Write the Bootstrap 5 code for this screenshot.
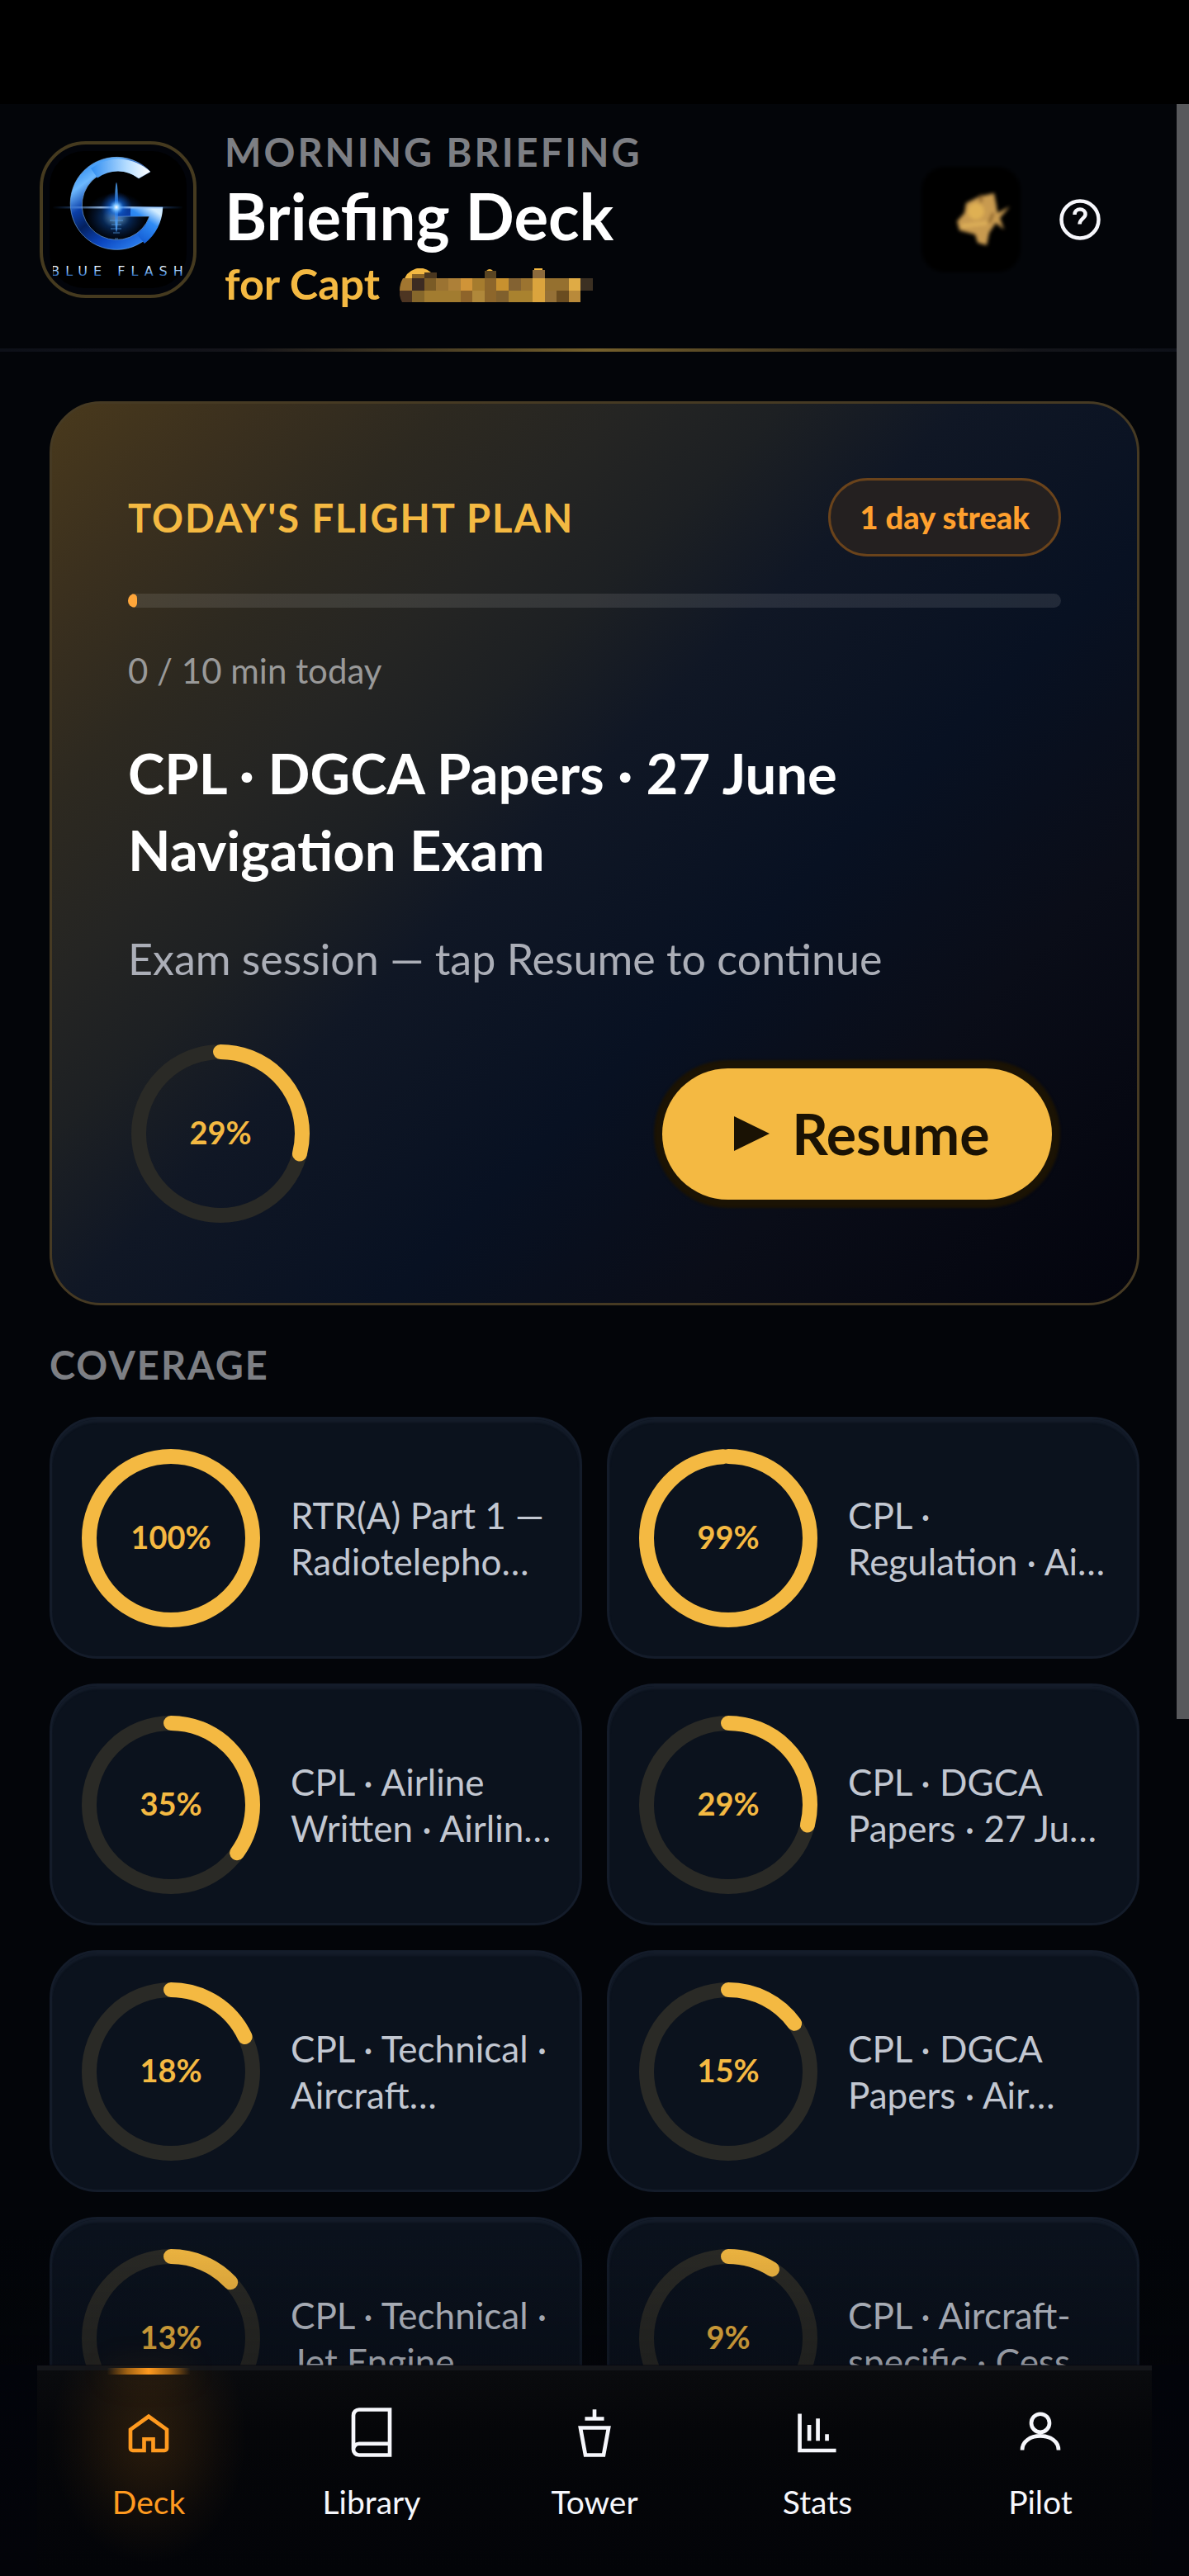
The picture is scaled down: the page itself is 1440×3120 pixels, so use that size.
<!DOCTYPE html>
<html lang="en" data-bs-theme="dark">
<head>
<meta charset="utf-8">
<meta name="viewport" content="width=device-width, initial-scale=1">
<title>Briefing Deck</title>
<link href="https://cdn.jsdelivr.net/npm/bootstrap@5.3.0/dist/css/bootstrap.min.css" rel="stylesheet">
<style>
  :root { --gold: #f4b942; --orange: #ff9a1f; --ink: #030509; --snow: #f6f7fc; --muted: #7d7f84; }
  body { background: var(--ink); color: var(--snow); font-family: Lato, "Open Sans", sans-serif; min-height: 100vh; overflow: hidden; }
  .status-strip { height: 126px; background: #000; }
  .app-header { padding: 27px 66px 43px 48px; }
  .header-rule { height: 4px; background: linear-gradient(90deg, #0d1018, #14141a 20%, #75602c 50%, #3b311e 70%, #14151a 87%, #0d1018); }
  .brand-logo { width: 190px; height: 190px; margin-right: 34px; }
  .eyebrow { font-size: 47px; line-height: 62px; font-weight: 700; letter-spacing: 3px; color: var(--muted); }
  .deck-title { font-size: 78px; line-height: 92px; font-weight: 700; }
  .pilot-line { font-size: 52px; line-height: 72px; font-weight: 700; color: var(--gold); }
  .redacted { width: 240px; height: 44px; }
  .avatar-art { width: 132px; height: 132px; }
  .help-btn { width: 132px; height: 132px; border: 0; color: var(--snow); }
  .content-pad { padding: 60px 60px 0; }
  .hero { border: 3px solid #463a23; border-radius: 62px; padding: 90px 92px 93px;
    background: linear-gradient(135deg, #49391c 0%, #3b301e 10%, #2d2920 20%, #252523 29%, #1d2023 37%, #101725 46%, #081122 62%, #0a0d18 77%, #03040d 100%); }
  .section-label { font-size: 47px; line-height: 60px; font-weight: 700; letter-spacing: 2px; }
  .plan-label { color: var(--gold); }
  .streak-pill { height: 95px; padding: 0 35px; border: 3px solid #6a431b; border-radius: 48px; background: #242020; color: #ffa02e; font-size: 38px; font-weight: 900; }
  .goal-bar { height: 17px; border-radius: 9px; margin: 45px 0 46px; background: rgba(255,255,255,.1); }
  .goal-bar .progress-bar { border-radius: 9px; background: #ffa63a; }
  .goal-text { font-size: 42px; line-height: 60px; color: #999999; margin-bottom: 48px; }
  .hero-title { font-size: 67px; line-height: 93px; font-weight: 700; margin-bottom: 49px; }
  .hero-sub { font-size: 52px; line-height: 72px; color: #abaeb7; margin-bottom: 64px; }
  .ring { width: 224px; height: 224px; flex: none; }
  .ring text { font-size: 38px; font-weight: 700; fill: var(--gold); text-anchor: middle; }
  .ring circle { fill: none; stroke-width: 18px; stroke: #2a2a26; }
  .ring .arc { stroke: var(--gold); stroke-linecap: round; }
  .resume-btn { width: 472px; height: 159px; margin-right: 11px; padding: 0 0 0 12px; border: 0; border-radius: 80px; background: var(--gold); color: #1a1204; font-size: 68px; font-weight: 700; box-shadow: 0 0 3px 10px #1b1304; }
  .resume-btn:hover { background: #ffc95a; color: #1a1204; }
  .resume-btn svg { width: 44px; height: 44px; margin-right: 26px; }
  .coverage-label { color: var(--muted); margin: 42px 0 33px; }
  .coverage-grid { display: grid; grid-template-columns: 1fr 1fr; gap: 30px; }
  .topic { height: 293px; padding: 0 32px; gap: 33px; border: 3px solid #141c2a; border-radius: 58px; background: #0b121d; box-shadow: inset 0 4px 2px #131b28; }
  .topic-name { font-size: 44px; line-height: 56px; color: #c2c7d1; white-space: nowrap; }
  .dock { padding: 165px 45px 0; background: linear-gradient(180deg, rgba(3,5,10,0), rgba(3,5,10,.26) 164px, #02040a 165px, #030409); pointer-events: none; }
  .dock-panel { border-top: 6px solid #14161a; background: linear-gradient(180deg, #0a0b0e, #050609 70px, #030408); pointer-events: auto; }
  .dock-link { position: relative; flex: 1 1 0; padding: 42px 0 64px; gap: 25px; color: var(--snow); text-decoration: none; font-size: 39px; line-height: 52px; }
  .dock-link svg { width: 66px; height: 66px; fill: none; stroke: currentColor; stroke-width: 1.7; stroke-linejoin: miter; }
  .dock-link.current { color: var(--orange); background: radial-gradient(ellipse 44% 62% at 50% 32%, rgba(255,154,31,.15), rgba(255,154,31,.09) 40%, rgba(255,154,31,.03) 75%, transparent); }
  .dock-link.current::before { content: ""; position: absolute; top: -3px; left: 31%; right: 31%; height: 8px; background: linear-gradient(90deg, transparent, #a46414 25%, #ff9a1f 50%, #a46414 75%, transparent); box-shadow: 0 0 40px rgba(255,154,31,.22); }
  .scroll-thumb { position: fixed; top: 126px; right: 0; width: 15px; height: calc(63vh - 10px); background: #58595c; }
</style>
<script src="https://cdn.jsdelivr.net/npm/bootstrap@5.3.0/dist/js/bootstrap.bundle.min.js"></script>
</head>
<body>
<div class="status-strip"></div>

<header>
  <div class="app-header d-flex align-items-center">
    <svg class="brand-logo flex-shrink-0" viewBox="0 0 190 190" role="img" aria-label="Blue Flash">
      <defs>
        <linearGradient id="chrome" x1="0.1" y1="0.1" x2="0.75" y2="1">
          <stop offset="0" stop-color="#2f8cf0"/><stop offset=".16" stop-color="#6cb8ff"/><stop offset=".34" stop-color="#0b3fa8"/>
          <stop offset=".5" stop-color="#04215f"/><stop offset=".72" stop-color="#0b46c0"/><stop offset="1" stop-color="#2f86f4"/>
        </linearGradient>
        <linearGradient id="tip" x1="0" y1="0" x2="1" y2="0">
          <stop offset="0" stop-color="#2f8df2"/><stop offset=".6" stop-color="#b4dcff"/><stop offset="1" stop-color="#ffffff"/>
        </linearGradient>
        <linearGradient id="side" x1="0" y1="1" x2=".6" y2="0">
          <stop offset="0" stop-color="#0b4cc8"/><stop offset=".7" stop-color="#2f8cf5"/><stop offset="1" stop-color="#d2ecff"/>
        </linearGradient>
        <radialGradient id="flare"><stop offset="0" stop-color="#fff"/><stop offset=".18" stop-color="#78c0ff"/><stop offset=".45" stop-color="#1268e0" stop-opacity=".6"/><stop offset="1" stop-color="#0a3c9c" stop-opacity="0"/></radialGradient>
        <linearGradient id="beam"><stop offset="0" stop-color="#1b6fe8" stop-opacity="0"/><stop offset=".47" stop-color="#d8efff"/><stop offset="1" stop-color="#1b6fe8" stop-opacity="0"/></linearGradient>
        <linearGradient id="word" x1="0" y1="0" x2="0" y2="1"><stop offset=".2" stop-color="#f0f8ff"/><stop offset=".6" stop-color="#6aa8ee"/><stop offset=".85" stop-color="#174f9e"/></linearGradient>
        <clipPath id="artClip"><rect x="16" y="12" width="157" height="166" rx="36"/></clipPath>
      </defs>
      <rect x="2" y="2" width="186" height="186" rx="54" fill="#02040a" stroke="#453a1f" stroke-width="4"/>
      <rect x="12" y="12" width="166" height="166" rx="42" fill="#000"/>
      <g clip-path="url(#artClip)">
        <ellipse cx="93" cy="92" rx="38" ry="30" fill="url(#flare)" opacity=".6"/>
        <path d="M134 37A56 56 0 1 0 149 80H93v11h40a42 42 0 1 1-13-46z" fill="url(#chrome)" stroke="#7fb9f5" stroke-width=".6"/>
        <path d="M134 37A56 56 0 0 0 62 33l8 11.500A42 42 0 0 1 120 45z" fill="url(#tip)"/>
        <path d="M149 80H110v11h23a42 42 0 0 1-15 22l9 11A56 56 0 0 0 149 80z" fill="url(#side)"/>
        <rect x="15" y="79" width="160" height="2.500" fill="url(#beam)"/>
        <ellipse cx="93" cy="80" rx="2" ry="30" fill="#4fa5ff" opacity=".8"/>
        <circle cx="93" cy="80" r="19" fill="url(#flare)"/>
        <path d="M85 96h16M87 101h12M86 106h13M89 111h8M91 118h4" stroke="#5aa6f2" stroke-width="1.200" opacity=".7"/>
      </g>
      <clipPath id="wordClip"><rect x="16" y="145" width="157" height="25"/></clipPath>
      <g clip-path="url(#wordClip)"><text x="97" y="163" text-anchor="middle" font-family="DejaVu Sans" font-size="16" letter-spacing="7" fill="url(#word)">BLUE FLASH</text></g>
    </svg>
    <div class="flex-grow-1">
      <div class="eyebrow">MORNING BRIEFING</div>
      <h1 class="deck-title m-0">Briefing Deck</h1>
      <div class="pilot-line d-flex align-items-center">
        <span>for Capt</span>
        <svg class="redacted ms-4 mt-2" viewBox="0 0 240 44" aria-label="Name hidden" role="img">
          <path d="M5 16A20 20 0 0 1 38 5L20 10z" fill="#f4b942"/>
          <path d="M4 12h12v15H0Q0 19 4 12z" fill="#a27630"/><path d="M0 27h15v14H3Q-1 34 0 27z" fill="#4d3522"/>
          <path d="M15 7h15v5h-15z" fill="#8a6427"/><path d="M30 5h15v7h-15z" fill="#4a371f"/>
          <path d="M15 12h15v15h-15z" fill="#3c2b22"/><path d="M30 12h14v15h-14z" fill="#7a5b26"/>
          <path d="M15 27h15v14h-15z" fill="#86672b"/><path d="M30 27h44v14h-44z" fill="#a27c30"/>
          <path d="M44 12h15v15h-15z" fill="#9b7332"/><path d="M59 12h15v15h-15z" fill="#ad8038"/><path d="M74 12h14v15h-14z" fill="#d09438"/>
          <path d="M88 12h15v15h-15z" fill="#a67c2e"/><path d="M74 27h14v14h-14z" fill="#8e642a"/><path d="M88 27h15v14h-15z" fill="#b0883a"/>
          <path d="M103 3h14v9h-14z" fill="#5a4522"/><path d="M105 3q4-4 8 0z" fill="#f4b942"/>
          <path d="M103 12h14v29h-14z" fill="#8d662b"/><path d="M117 12h15v15h-15z" fill="#c8912f"/><path d="M117 27h15v14h-15z" fill="#80602d"/>
          <path d="M132 12h15v15h-15z" fill="#836232"/><path d="M147 12h14v15h-14z" fill="#9c7430"/><path d="M132 27h29v14h-29z" fill="#a9822f"/>
          <path d="M161 2h15v10h-15z" fill="#8c6a3c"/><path d="M163 0h10v2h-10z" fill="#f4b942"/><path d="M161 12h15v29h-15z" fill="#dba43d"/>
          <path d="M176 12h29v15h-29z" fill="#95702f"/><path d="M176 27h14v14h-14z" fill="#957036"/><path d="M190 27h15v14h-15z" fill="#6a4c20"/>
          <path d="M205 12h14v15h-14z" fill="#dfab45"/><path d="M205 27h14v14h-14z" fill="#b98a3a"/><path d="M219 12h15v15h-15z" fill="#3b3022"/>
        </svg>
      </div>
    </div>
    <svg class="avatar-art" viewBox="0 0 132 132" role="img" aria-label="Pilot badge">
      <defs><filter id="soft" x="-20%" y="-20%" width="140%" height="140%"><feGaussianBlur stdDeviation="2"/></filter></defs>
      <rect x="6" y="2" width="120" height="128" rx="28" fill="#020304" filter="url(#soft)"/>
      <g filter="url(#soft)">
        <path d="M60 46L76 38 94 34 97 50 98 58 113 50 101 64 106 78 96 70 88 82 85 97 74 94 71 84 52 79 49 68 58 58z" fill="#c89a50"/>
        <circle cx="72" cy="56" r="10" fill="#dfb052"/>
        <path d="M54 74l32-4" stroke="#e0b25a" stroke-width="4"/>
        <path d="M78 36v9M93 58l-5 12" stroke="#7c5522" stroke-width="3"/>
      </g>
    </svg>
    <button type="button" class="help-btn btn p-0" aria-label="Help">
      <svg width="52" height="52" viewBox="0 0 52 52" fill="none" stroke="currentColor" stroke-width="4.500">
        <circle cx="26" cy="26" r="22.500"/><path d="M19.500 20c0-4.500 3-6.500 6.500-6.500s6.500 2.500 6.500 6c0 5-7 5.500-7 12"/>
      </svg>
    </button>
  </div>
  <div class="header-rule"></div>
</header>

<main class="content-pad">
  <section class="hero">
    <div class="d-flex justify-content-between align-items-center">
      <h2 class="section-label plan-label m-0">TODAY'S FLIGHT PLAN</h2>
      <span class="streak-pill d-flex align-items-center">1 day streak</span>
    </div>
    <div class="goal-bar progress" role="progressbar" aria-label="Minutes today" aria-valuenow="0" aria-valuemin="0" aria-valuemax="10">
      <div class="progress-bar" style="width:1%"></div>
    </div>
    <div class="goal-text">0 / 10 min today</div>
    <h3 class="hero-title">CPL · DGCA Papers · 27 June<br>Navigation Exam</h3>
    <p class="hero-sub">Exam session — tap Resume to continue</p>
    <div class="d-flex justify-content-between align-items-center">
      <svg class="ring" viewBox="0 0 224 224"><circle cx="112" cy="112" r="99"/><circle class="arc" cx="112" cy="112" r="99" pathLength="100" stroke-dasharray="29 100" transform="rotate(-90 112 112)"/><text x="112" y="125">29%</text></svg>
      <button type="button" class="resume-btn btn d-flex align-items-center justify-content-center"><svg viewBox="0 0 44 44"><path d="M0 1l43 21L0 43z" fill="currentColor"/></svg>Resume</button>
    </div>
  </section>

  <h2 class="section-label coverage-label">COVERAGE</h2>
  <section class="coverage-grid">
    <div class="topic d-flex align-items-center"><svg class="ring" viewBox="0 0 224 224"><circle class="arc" cx="112" cy="112" r="99"/><text x="112" y="125">100%</text></svg><div class="topic-name">RTR(A) Part 1 —<br>Radiotelepho…</div></div>
    <div class="topic d-flex align-items-center"><svg class="ring" viewBox="0 0 224 224"><circle cx="112" cy="112" r="99"/><circle class="arc" cx="112" cy="112" r="99" pathLength="100" stroke-dasharray="99 100" transform="rotate(-90 112 112)"/><text x="112" y="125">99%</text></svg><div class="topic-name">CPL ·<br>Regulation · Ai…</div></div>
    <div class="topic d-flex align-items-center"><svg class="ring" viewBox="0 0 224 224"><circle cx="112" cy="112" r="99"/><circle class="arc" cx="112" cy="112" r="99" pathLength="100" stroke-dasharray="35 100" transform="rotate(-90 112 112)"/><text x="112" y="125">35%</text></svg><div class="topic-name">CPL · Airline<br>Written · Airlin…</div></div>
    <div class="topic d-flex align-items-center"><svg class="ring" viewBox="0 0 224 224"><circle cx="112" cy="112" r="99"/><circle class="arc" cx="112" cy="112" r="99" pathLength="100" stroke-dasharray="29 100" transform="rotate(-90 112 112)"/><text x="112" y="125">29%</text></svg><div class="topic-name">CPL · DGCA<br>Papers · 27 Ju…</div></div>
    <div class="topic d-flex align-items-center"><svg class="ring" viewBox="0 0 224 224"><circle cx="112" cy="112" r="99"/><circle class="arc" cx="112" cy="112" r="99" pathLength="100" stroke-dasharray="18 100" transform="rotate(-90 112 112)"/><text x="112" y="125">18%</text></svg><div class="topic-name">CPL · Technical ·<br>Aircraft…</div></div>
    <div class="topic d-flex align-items-center"><svg class="ring" viewBox="0 0 224 224"><circle cx="112" cy="112" r="99"/><circle class="arc" cx="112" cy="112" r="99" pathLength="100" stroke-dasharray="15 100" transform="rotate(-90 112 112)"/><text x="112" y="125">15%</text></svg><div class="topic-name">CPL · DGCA<br>Papers · Air…</div></div>
    <div class="topic d-flex align-items-center"><svg class="ring" viewBox="0 0 224 224"><circle cx="112" cy="112" r="99"/><circle class="arc" cx="112" cy="112" r="99" pathLength="100" stroke-dasharray="13 100" transform="rotate(-90 112 112)"/><text x="112" y="125">13%</text></svg><div class="topic-name">CPL · Technical ·<br>Jet Engine…</div></div>
    <div class="topic d-flex align-items-center"><svg class="ring" viewBox="0 0 224 224"><circle cx="112" cy="112" r="99"/><circle class="arc" cx="112" cy="112" r="99" pathLength="100" stroke-dasharray="9 100" transform="rotate(-90 112 112)"/><text x="112" y="125">9%</text></svg><div class="topic-name">CPL · Aircraft-<br>specific · Cess…</div></div>
  </section>
</main>

<nav class="dock fixed-bottom" aria-label="Main">
  <div class="dock-panel d-flex">
    <a href="#deck" class="dock-link current d-flex flex-column align-items-center" aria-current="page"><svg viewBox="0 0 24 24"><path d="M10 20H5a1 1 0 0 1-1-1v-8.200L12 5l8 5.800V19a1 1 0 0 1-1 1h-5v-5h-4v5.800M14 20.800V20"/></svg>Deck</a>
    <a href="#library" class="dock-link d-flex flex-column align-items-center"><svg viewBox="0 0 24 24"><path d="M4 19.500V4.500A2.500 2.500 0 0 1 6.500 2H20v20H6.500A2.500 2.500 0 0 1 4 19.500 2.500 2.500 0 0 1 6.500 17H20"/></svg>Library</a>
    <a href="#tower" class="dock-link d-flex flex-column align-items-center"><svg viewBox="0 0 24 24"><path d="M12 1.900V6M7.800 6h8.400M5.800 10h12.400l-2.200 12H8z"/></svg>Tower</a>
    <a href="#stats" class="dock-link d-flex flex-column align-items-center"><svg viewBox="0 0 24 24"><path d="M4.200 3.800V20h16M8.400 8.700v7M12.200 5.900v9.800M16.200 12.800v2.900"/></svg>Stats</a>
    <a href="#pilot" class="dock-link d-flex flex-column align-items-center"><svg viewBox="0 0 24 24"><circle cx="12" cy="7.900" r="4"/><path d="M4 19.800c0-3.800 3.500-6.200 8-6.200s8 2.400 8 6.200"/></svg>Pilot</a>
  </div>
</nav>
<div class="scroll-thumb" aria-hidden="true"></div>
</body>
</html>
